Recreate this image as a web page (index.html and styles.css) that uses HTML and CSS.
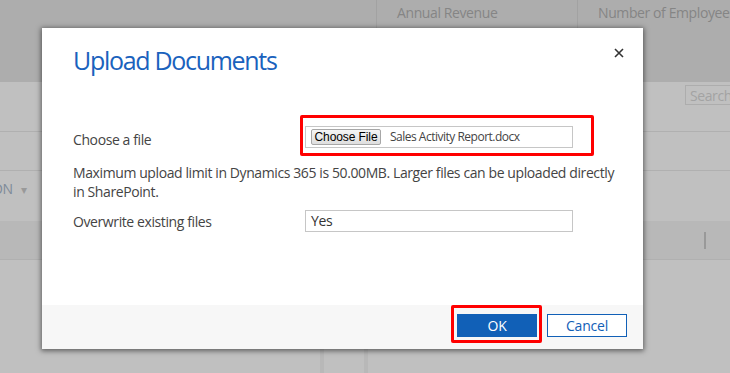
FILE: index.html
```html
<!DOCTYPE html>
<html lang="en">
<head>
    <meta charset="UTF-8">
    <meta name="viewport" content="width=device-width, initial-scale=1.0">
    <title>Upload Documents</title>
    <link rel="stylesheet" href="styles.css">
</head>
<body>

<div class="page">
    <!-- Шапка таблицы под диалогом -->
    <div class="grid-head">
        <div class="col col-first"></div>
        <div class="col col-revenue">Annual Revenue</div>
        <div class="col col-employees">Number of Employees</div>
    </div>
    <div class="toolbar">
        <div class="search">Search</div>
    </div>
    <div class="row-line"></div>
    <div class="filter-row">
        <span class="filter">ON <span class="caret">&#9662;</span></span>
    </div>
    <div class="list-head">
        <span class="list-bar"></span>
    </div>
    <div class="list-body">
        <span class="list-col"></span>
        <span class="list-col"></span>
    </div>
</div>

<div class="overlay">
    <div class="dialog">
        <div class="dialog-body">
            <button class="close" aria-label="Close">
                <svg width="10" height="10" viewBox="0 0 10 10"><path d="M1 1L9 9M9 1L1 9" stroke="#333" stroke-width="1.6"/></svg>
            </button>
            <h1 class="title">Upload Documents</h1>

            <div class="form-row first">
                <label class="label">Choose a file</label>
                <div class="highlight">
                    <div class="file-box">
                        <button class="file-btn">Choose File</button>
                        <span class="file-name">Sales Activity Report.docx</span>
                    </div>
                </div>
            </div>

            <p class="note">Maximum upload limit in Dynamics 365 is 50.00MB. Larger files can be uploaded directly in SharePoint.</p>

            <div class="form-row">
                <label class="label">Overwrite existing files</label>
                <div class="text-box">Yes</div>
            </div>
        </div>

        <div class="dialog-footer">
            <div class="highlight ok-wrap">
                <button class="btn btn-ok">OK</button>
            </div>
            <button class="btn btn-cancel">Cancel</button>
        </div>
    </div>
</div>

</body>
</html>
```

FILE: styles.css
```css
body {
    margin: 0;
    font-family: "Segoe UI", "Open Sans", sans-serif;
    letter-spacing: -0.4px;
    background-color: #c0c0c0;
    overflow: hidden;
}
.page {
    width: 730px;
    height: 373px;
}
.grid-head {
    display: flex;
    height: 82px;
    background-color: #adadad;
}
.col {
    font-size: 14px;
    color: #858585;
    padding: 3px 0 0 20px;
    border-left: 1px solid #a2a2a2;
    height: 30px;
    box-sizing: border-box;
}
.col-first {
    width: 376px;
    border-left: none;
    padding: 0;
}
.col-revenue {
    width: 201px;
}
.col-employees {
    flex: 1;
    white-space: nowrap;
    overflow: hidden;
}
.toolbar {
    height: 50px;
    display: flex;
    justify-content: flex-end;
    padding-top: 3px;
    box-sizing: border-box;
    border-bottom: 1px solid #b0b0b0;
}
.search {
    width: 60px;
    height: 20px;
    border: 1px solid #adadad;
    font-size: 14px;
    color: #a3a3a3;
    padding-left: 4px;
    line-height: 19px;
    box-sizing: border-box;
    margin-right: -15px;
}
.row-line {
    height: 38px;
    border-bottom: 1px solid #b0b0b0;
}
.filter-row {
    height: 50px;
    font-size: 14px;
    color: #7d8a99;
    padding-top: 8px;
    box-sizing: border-box;
}
.filter {
    margin-left: -8px;
}
.caret {
    font-size: 12px;
    color: #999;
    margin-left: 5px;
}
.list-head {
    height: 39px;
    background-color: #b8b8b8;
    border-bottom: 1px solid #b0b0b0;
    display: flex;
    justify-content: flex-end;
    padding: 11px 24px 0 0;
    box-sizing: border-box;
}
.list-bar {
    width: 2px;
    height: 17px;
    background-color: #999;
}
.list-body {
    display: flex;
    height: 113px;
    padding-left: 320px;
    gap: 40px;
}
.list-col {
    width: 4px;
    background-color: #b8b8b8;
}

/* Диалог поверх страницы */
.overlay {
    position: absolute;
    left: 0;
    top: 0;
    width: 730px;
    height: 373px;
}
.dialog {
    position: absolute;
    left: 42px;
    top: 28px;
    width: 601px;
    height: 321px;
    background-color: #fff;
    display: flex;
    flex-direction: column;
    box-shadow: 0 1px 5px 1px rgba(0, 0, 0, 0.5);
}
.dialog-body {
    flex: 1;
    position: relative;
    padding: 14px 26px 0 31px;
}
.close {
    position: absolute;
    right: 19px;
    top: 20px;
    border: none;
    background: none;
    padding: 0;
    width: 10px;
    height: 10px;
    cursor: pointer;
}
.close svg {
    display: block;
}
.title {
    margin: 0;
    font-size: 25px;
    font-weight: normal;
    letter-spacing: -1.3px;
    line-height: 36px;
    color: #1a62bd;
}
.form-row {
    display: flex;
    align-items: center;
    height: 22px;
}
.form-row.first {
    margin-top: 50px;
}
.label {
    width: 232px;
    font-size: 14px;
    color: #444;
}
.highlight {
    border: 3px solid #f00;
    border-radius: 2px;
}
.form-row .highlight {
    margin: -8px 0 0 -5px;
    padding: 8px 18px 5px 2px;
}
.file-box {
    width: 268px;
    height: 22px;
    border: 1px solid #c6c6c6;
    box-sizing: border-box;
    display: flex;
    align-items: center;
    padding-left: 5px;
}
.file-btn {
    font-family: "Liberation Sans", Arial, sans-serif;
    font-size: 12px;
    letter-spacing: -0.1px;
    color: #000;
    width: 70px;
    height: 16px;
    padding: 0;
    border: 1px solid #a7a7a7;
    border-radius: 2px;
    background: linear-gradient(#f5f5f5, #dedede);
    line-height: 14px;
}
.file-name {
    font-size: 12px;
    letter-spacing: -0.5px;
    color: #444;
    margin-left: 9px;
}
.note {
    margin: 13px 0 9px;
    font-size: 14px;
    line-height: 19px;
    color: #444;
}
.text-box {
    width: 268px;
    height: 22px;
    border: 1px solid #c6c6c6;
    box-sizing: border-box;
    font-size: 14px;
    color: #333;
    padding-left: 5px;
    line-height: 20px;
}
.dialog-footer {
    height: 44px;
    background-color: #f7f7f7;
    display: flex;
    align-items: flex-start;
    justify-content: flex-end;
    padding: 0 16px 0 0;
    box-sizing: border-box;
    gap: 5px;
}
.ok-wrap {
    padding: 6px 2px 3px 3px;
}
.btn {
    width: 80px;
    height: 23px;
    font-family: "Segoe UI", "Open Sans", sans-serif;
    font-size: 14px;
    letter-spacing: -0.2px;
    line-height: 21px;
    padding: 0;
    cursor: pointer;
    box-sizing: border-box;
}
.btn-ok {
    display: block;
    background-color: #1160b7;
    color: #fff;
    border: 1px solid #1160b7;
}
.btn-cancel {
    margin-top: 9px;
    background-color: #fff;
    color: #1160b7;
    border: 1px solid #1160b7;
}
```
